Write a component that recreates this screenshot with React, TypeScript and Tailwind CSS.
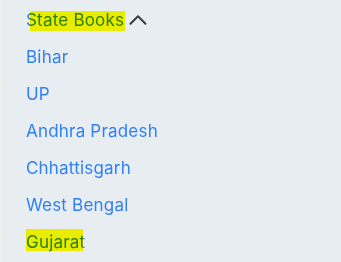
import React from "react";

const items = ["Bihar", "UP", "Andhra Pradesh", "Chhattisgarh", "West Bengal"];

export default function App() {
  return (
    <div className="flex w-[341px] h-[262px] bg-[#e8edf2] overflow-hidden" style={{ fontFamily: "Inter, 'Noto Sans', sans-serif" }}>
      <div className="w-[3px] h-full bg-[#eceef0]" />
      <div className="flex flex-col gap-[13px] pt-[8px] pl-[23px] text-[17px] leading-[24px] tracking-[0.2px] text-[#2f7ff5]">
        <div className="flex items-center gap-[4px]">
          <span className="relative inline-block">
            State Books
            <span className="absolute left-[4px] right-[-1px] top-[3px] bottom-[1px] bg-[#ffff00] mix-blend-darken" />
          </span>
          <svg width="20" height="20" viewBox="0 0 24 24" fill="none" stroke="#333a40" strokeWidth="2.3" strokeLinecap="round" strokeLinejoin="round">
            <path d="M3 16.5l9-9 9 9" />
          </svg>
        </div>
        {items.map((t) => (
          <div key={t}>{t}</div>
        ))}
        <div>
          <span className="relative inline-block">
            Gujarat
            <span className="absolute left-0 right-[2px] top-[-1px] bottom-[3px] bg-[#ffff00] mix-blend-darken" />
          </span>
        </div>
      </div>
    </div>
  );
}
